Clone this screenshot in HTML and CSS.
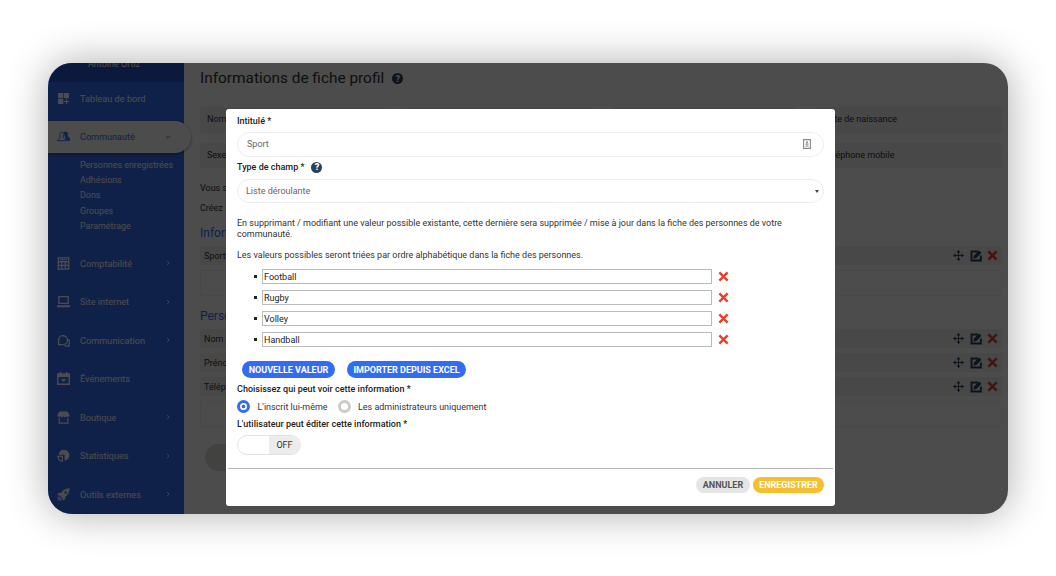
FILE: index.html
```html
<!DOCTYPE html>
<html lang="fr">

<head>
  <meta charset="utf-8">
  <title>Informations de fiche profil</title>
  <link rel="stylesheet" href="styles.css">
</head>

<body>
  <!-- shared icons -->
  <svg class="sprite" width="0" height="0">
    <symbol id="cross" viewBox="0 0 12 12">
      <path d="M1.500 1.600 10.500 10.400M10.500 1.600 1.500 10.400" fill="none" stroke="currentColor" stroke-width="2.700" />
    </symbol>
    <symbol id="move" viewBox="0 0 12 12">
      <path d="M6 1v10M1 6h10" fill="none" stroke="currentColor" stroke-width="1" />
      <path d="M6 0 8.200 2.800H3.800zM6 12 8.200 9.200H3.800zM0 6 2.800 3.800v4.400zM12 6 9.200 3.800v4.400z" fill="currentColor" />
    </symbol>
    <symbol id="edit" viewBox="0 0 12 12">
      <path d="M8 1.500H1.500v9h9.300V5.500" fill="none" stroke="currentColor" stroke-width="1.900" />
      <path d="M3.300 8.800l.7-3.300L9.200.6l2.200 2.200-5.100 5.300z" fill="currentColor" />
    </symbol>
    <symbol id="chevron" viewBox="0 0 6 6">
      <path d="M2 .8 4 3 2 5.200" fill="none" stroke="currentColor" stroke-width=".8" />
    </symbol>
  </svg>

  <div class="app">
    <nav class="sidebar">
      <div class="user">Antoine Ortiz</div>
      <a class="item first">
        <svg class="icon" viewBox="0 0 12 12"><path d="M1 1h4.800v4.800H1zM6.500 1H11v4.800H6.500zM1 6.500h4.800V11H1zM8.300 6.500h1v1.800h1.900v1H9.300v1.900h-1V9.300H6.500v-1h1.800z" fill="currentColor" /></svg>
        <span>Tableau de bord</span>
      </a>
      <a class="item active">
        <svg class="icon people" viewBox="0 0 14 12"><path d="M7 1h2.500c2.400 0 2.600 2.400 1.900 4.300-.4 1.300 2.600 1.400 2.600 3.400v2h-4z" fill="currentColor" /><path d="M5 1.500c-2 0-2.300 1.800-1.800 3.500.3 1.300.5 1.700.1 2.300C2.500 8.200.7 8 .7 10.500h8.800c0-2.500-2-2.300-2.700-3.200-.4-.6 0-1 .2-2.300.3-1.700 0-3.500-2-3.500z" class="outline" /></svg>
        <span>Communauté</span>
        <svg class="arrow" viewBox="0 0 6 6"><path d="M.8 2 3 4.200 5.200 2" fill="none" stroke="currentColor" stroke-width=".9" /></svg>
      </a>
      <div class="submenu">
        <a>Personnes enregistrées</a>
        <a>Adhésions</a>
        <a>Dons</a>
        <a>Groupes</a>
        <a>Paramétrage</a>
      </div>
      <a class="item">
        <svg class="icon" viewBox="0 0 12 12"><path d="M1.200.8h9.600v10.400H1.200zM1.200 4.400h9.600M1.200 7.800h9.600M4.300 4.400v7M7.600 4.400v7" fill="none" stroke="currentColor" stroke-width="1.200" /><path d="M3 2h6v1H3z" fill="currentColor" /></svg>
        <span>Comptabilité</span>
        <svg class="arrow"><use href="#chevron" /></svg>
      </a>
      <a class="item">
        <svg class="icon" viewBox="0 0 12 12"><path d="M1.700 1.500h8.600v6.300H1.700z" fill="none" stroke="currentColor" stroke-width="1.200" /><path d="M0 9.500h12v1.700H0z" fill="currentColor" /></svg>
        <span>Site internet</span>
        <svg class="arrow"><use href="#chevron" /></svg>
      </a>
      <a class="item">
        <svg class="icon" viewBox="0 0 12 12"><path d="M1.500 9.800V5.200a4.100 4.100 0 1 1 4.100 4.600zM10.500 5c1.300 1.500 1.200 3.500.5 4.500l.2 1.700H8.500L7 10.500" fill="none" stroke="currentColor" stroke-width="1.200" /></svg>
        <span>Communication</span>
        <svg class="arrow"><use href="#chevron" /></svg>
      </a>
      <a class="item">
        <svg class="icon" viewBox="0 0 12 12"><path d="M.7 1.700h10.600v9.600H.7z" fill="none" stroke="currentColor" stroke-width="1.300" /><path d="M.5 2h11v2.500H.5zM2.500 0H4v2H2.500zM8 0h1.500v2H8zM6 9.200 4.200 7.400c-.3-1 1.300-1.600 1.800-.5.500-1.100 2.100-.5 1.800.5z" fill="currentColor" /></svg>
        <span>Événements</span>
      </a>
      <a class="item">
        <svg class="icon" viewBox="0 0 12 12"><path d="M2.200.5h7.600L11.600 4c0 1.700-2 2-2.800.8-.7 1.200-2.200 1.200-2.800 0-.6 1.200-2.100 1.200-2.800 0C2.400 6 .4 5.700.4 4z" fill="currentColor" /><path d="M2 6.500v4.700h8V6.500" fill="none" stroke="currentColor" stroke-width="1.100" /></svg>
        <span>Boutique</span>
        <svg class="arrow"><use href="#chevron" /></svg>
      </a>
      <a class="item">
        <svg class="icon" viewBox="0 0 12 12"><path d="M1.500 5.300A5 5 0 1 1 7 10.600V5.300z" fill="currentColor" /><path d="M.8 6.800H5v4.400C2.800 11 1 9 .8 6.800z" fill="none" stroke="currentColor" /></svg>
        <span>Statistiques</span>
        <svg class="arrow"><use href="#chevron" /></svg>
      </a>
      <a class="item">
        <svg class="icon" viewBox="0 0 12 12"><path d="M11.700.3C8 .3 5.500 2 4 4.300L1.500 4.500.2 6.800l2.300.1 2.600 2.600.1 2.200 2.300-1.300.2-2.400C10 6.500 11.700 4 11.700.3zM8 3a1.100 1.100 0 1 1-.1 2.200A1.100 1.100 0 0 1 8 3z" fill="currentColor" fill-rule="evenodd" /><path d="M.6 9.600 2.300 8M.6 11.500 3.300 8.900M2.600 11.600l1.500-1.500" stroke="currentColor" /></svg>
        <span>Outils externes</span>
        <svg class="arrow"><use href="#chevron" /></svg>
      </a>
    </nav>

    <main class="content">
      <h1>Informations de fiche profil <span class="help">?</span></h1>
      <div class="filters">
        <div class="cell">Nom</div>
        <div class="cell"></div>
        <div class="cell"></div>
        <div class="cell">Date de naissance</div>
        <div class="cell">Sexe</div>
        <div class="cell"></div>
        <div class="cell"></div>
        <div class="cell">Téléphone mobile</div>
      </div>
      <p>Vous souhaitez</p>
      <p>Créez</p>

      <h2>Informations</h2>
      <div class="row">
        <span>Sport</span>
        <svg class="move"><use href="#move" /></svg>
        <svg class="edit"><use href="#edit" /></svg>
        <svg class="delete"><use href="#cross" /></svg>
      </div>
      <div class="empty"></div>

      <h2 class="second">Personnes</h2>
      <div class="row">
        <span>Nom</span>
        <svg class="move"><use href="#move" /></svg>
        <svg class="edit"><use href="#edit" /></svg>
        <svg class="delete"><use href="#cross" /></svg>
      </div>
      <div class="row">
        <span>Prénom</span>
        <svg class="move"><use href="#move" /></svg>
        <svg class="edit"><use href="#edit" /></svg>
        <svg class="delete"><use href="#cross" /></svg>
      </div>
      <div class="row">
        <span>Téléphone</span>
        <svg class="move"><use href="#move" /></svg>
        <svg class="edit"><use href="#edit" /></svg>
        <svg class="delete"><use href="#cross" /></svg>
      </div>
      <div class="empty"></div>
      <div class="add"></div>
    </main>

    <div class="overlay">
      <form class="modal">
        <div class="modal-body">
          <label class="label">Intitulé *</label>
          <div class="field">
            <span>Sport</span>
            <svg class="card" viewBox="0 0 8 10"><path d="M.6.6h6.800v8.800H.6z" fill="none" stroke="#888" stroke-width="1.100" /><circle cx="4" cy="3.300" r="1" fill="#888" /><path d="M2.300 5.200h3.400M2.300 7.200h3.400M4 4v3" stroke="#999" stroke-width=".9" /></svg>
          </div>
          <label class="label type">Type de champ * <span class="help">?</span></label>
          <div class="field select">
            <span>Liste déroulante</span>
            <i class="caret"></i>
          </div>
          <p class="note">En supprimant / modifiant une valeur possible existante, cette dernière sera supprimée / mise à jour dans la fiche des personnes de votre communauté.</p>
          <p class="hint">Les valeurs possibles seront triées par ordre alphabétique dans la fiche des personnes.</p>
          <ul class="values">
            <li><span class="value">Football</span><svg class="delete"><use href="#cross" /></svg></li>
            <li><span class="value">Rugby</span><svg class="delete"><use href="#cross" /></svg></li>
            <li><span class="value">Volley</span><svg class="delete"><use href="#cross" /></svg></li>
            <li><span class="value">Handball</span><svg class="delete"><use href="#cross" /></svg></li>
          </ul>
          <div class="buttons">
            <a class="btn new">NOUVELLE VALEUR</a>
            <a class="btn excel">IMPORTER DEPUIS EXCEL</a>
          </div>
          <label class="label">Choisissez qui peut voir cette information *</label>
          <div class="radios">
            <i class="radio checked"></i><span class="self">L'inscrit lui-même</span>
            <i class="radio"></i><span>Les administrateurs uniquement</span>
          </div>
          <label class="label">L'utilisateur peut éditer cette information *</label>
          <div class="toggle"><span>OFF</span></div>
        </div>
        <div class="modal-footer">
          <a class="btn cancel">ANNULER</a>
          <a class="btn save">ENREGISTRER</a>
        </div>
      </form>
    </div>
  </div>
</body>

</html>
```
FILE: styles.css
```css
* {
  box-sizing: border-box;
}

body {
  height: 576px;
  margin: 0;
  padding: 63px 48px 0;
  background: #fff;
  font-family: Roboto, sans-serif;
  font-size: 9px;
  color: #333;
}

svg {
  display: block;
  flex: none;
}

.sprite {
  position: absolute;
}

h1, h2, p, ul {
  margin: 0;
  padding: 0;
  font-weight: normal;
}

.app {
  position: relative;
  display: flex;
  width: 960px;
  height: 451px;
  border-radius: 24px;
  overflow: hidden;
  background: #fff;
  box-shadow: 0 0 40px rgba(0, 0, 0, 0.33);
}

/* sidebar */
.sidebar {
  width: 136px;
  height: 451px;
  flex: none;
  background: #356cf6;
  color: #fff;
}

.user {
  height: 19px;
  padding-left: 40px;
  background: #2853c8;
  line-height: 2px;
  font-size: 9px;
}

.item {
  display: flex;
  align-items: center;
  height: 38.500px;
  padding: 0 13px 0 9px;
  font-size: 9.200px;
}

.item.first {
  height: 32px;
  margin-bottom: 7px;
}

.item span {
  flex: 1;
  margin-left: 10px;
  white-space: nowrap;
}

.icon {
  width: 13px;
  height: 13px;
}

.arrow {
  width: 6px;
  height: 6px;
}

.item.active {
  position: relative;
  width: 143px;
  height: 32px;
  padding-right: 20px;
  padding-bottom: 1px;
  border-radius: 0 16px 16px 0;
  background: #fff;
  color: #356cf6;
  font-size: 9.100px;
  box-shadow: 0 1px 3px rgba(0, 0, 0, 0.4);
}

.people .outline {
  fill: #fff;
  stroke: #356cf6;
}

.submenu {
  height: 91px;
  padding: 5px 0 0 32px;
  font-size: 8.900px;
}

.submenu a {
  display: block;
  line-height: 15.200px;
  white-space: nowrap;
}

/* page */
.content {
  flex: 1;
  padding: 6px 6px 0 16px;
}

h1 {
  display: flex;
  align-items: center;
  height: 18px;
  font-size: 15.400px;
}

h1 .help {
  margin-top: 1px;
  margin-left: 8px;
}

.help {
  display: inline-flex;
  align-items: center;
  justify-content: center;
  width: 11px;
  height: 11px;
  margin-left: 7px;
  border-radius: 50%;
  background: #2b415c;
  color: #fff;
  font-size: 9px;
  font-weight: 900;
}

.filters {
  display: grid;
  grid-template-columns: repeat(4, 1fr);
  gap: 10px 20px;
  margin: 20px 0 10px;
}

.cell {
  height: 25.500px;
  padding-left: 7px;
  border-radius: 3px;
  background: #f0f0f0;
  line-height: 25px;
}

.content p {
  height: 20px;
  line-height: 20px;
}

h2 {
  margin: 5px 0 3px;
  color: #356cf6;
  font-size: 12px;
  line-height: 20px;
}

h2.second {
  margin: 10px 0 3px;
}

.row {
  display: flex;
  align-items: center;
  height: 19px;
  margin-bottom: 5px;
  padding: 0 4px 0 4px;
  border-radius: 3px;
  background: #f0f0f0;
}

.row span {
  flex: 1;
}

.row .move {
  width: 11px;
  height: 11px;
  margin-right: 6px;
  color: #2b415c;
}

.row .edit {
  width: 12px;
  height: 12px;
  margin-right: 5px;
  color: #2b415c;
}

.delete {
  width: 11px;
  height: 11px;
  color: #e8402a;
}

.empty {
  height: 26px;
  border: 1px solid #f0f0f0;
  border-radius: 3px;
}

.add {
  width: 80px;
  height: 27px;
  margin: 17px 0 0 5px;
  border-radius: 14px;
  background: #dededa;
}

/* modal */
.overlay {
  position: absolute;
  inset: 0;
  padding: 46px 0 0 178px;
  background: rgba(0, 0, 0, 0.7);
}

.modal {
  width: 609px;
  height: 396.500px;
  border-radius: 3px;
  background: #fff;
  color: #333;
}

.modal-body {
  height: 359px;
  padding: 5px 11px 0;
}

.label {
  display: block;
  height: 14px;
  color: #222;
  font-weight: 500;
  line-height: 14px;
}

.label.type {
  display: flex;
  align-items: center;
  height: 20px;
  margin-bottom: 2px;
}

.field {
  display: flex;
  align-items: center;
  justify-content: space-between;
  height: 25px;
  margin-top: 4px;
  padding: 0 12px 1px 9px;
  border: 1px solid #ececec;
  border-radius: 13px;
  color: #666;
}

.field.select {
  height: 24px;
  margin-top: 0;
  padding: 0 4px 0 8px;
}

.card {
  width: 8px;
  height: 10px;
}

.caret {
  border: 2px solid transparent;
  border-top: 3px solid #444;
  border-bottom: 0;
}

.note {
  margin-top: 15px;
  font-size: 8.990px;
  line-height: 11px;
}

.hint {
  margin: 9px 0 8px;
  font-size: 8.990px;
  line-height: 12px;
}

.values {
  list-style: none;
}

.values li {
  display: flex;
  align-items: center;
  height: 15px;
  margin-bottom: 6px;
  padding-left: 17px;
}

.values li::before {
  content: "";
  width: 3px;
  height: 3px;
  margin-right: 5px;
  background: #222;
}

.value {
  width: 450px;
  height: 15px;
  margin-right: 6px;
  padding-left: 1px;
  border: 1px solid #bbb;
  color: #222;
  line-height: 14px;
}

.buttons {
  display: flex;
  gap: 12px;
  margin: 14px 0 4px 5px;
}

.btn {
  display: flex;
  align-items: center;
  justify-content: center;
  height: 17px;
  border-radius: 9px;
  background: #326cf4;
  color: #fff;
  font-weight: 700;
  white-space: nowrap;
}

.btn.new {
  width: 93px;
}

.btn.excel {
  width: 119px;
}

.radios {
  display: flex;
  align-items: center;
  height: 21px;
  font-size: 8.950px;
}

.radios .self {
  margin-right: 10px;
}

.radio {
  width: 13px;
  height: 13px;
  margin-right: 7.500px;
  border: 3px solid #cbcbc6;
  border-radius: 50%;
}

.radio.checked {
  border-color: #326cf4;
  background: radial-gradient(#326cf4 1.500px, #fff 2.200px);
}

.toggle {
  display: flex;
  justify-content: flex-end;
  width: 64px;
  height: 20px;
  margin-top: 4px;
  border: 1px solid #e2e2e2;
  border-radius: 10px;
  overflow: hidden;
}

.toggle span {
  width: 31px;
  background: #ececec;
  text-align: center;
  line-height: 18px;
}

.modal-footer {
  display: flex;
  justify-content: flex-end;
  gap: 3px;
  margin: 0 2px;
  padding: 8px 9px 0 0;
  border-top: 1px solid #b5b5b5;
}

.btn.cancel {
  width: 54px;
  height: 16px;
  background: #e5e5e5;
  color: #555;
}

.btn.save {
  width: 71px;
  height: 16px;
  background: #f6bf2d;
}
```
